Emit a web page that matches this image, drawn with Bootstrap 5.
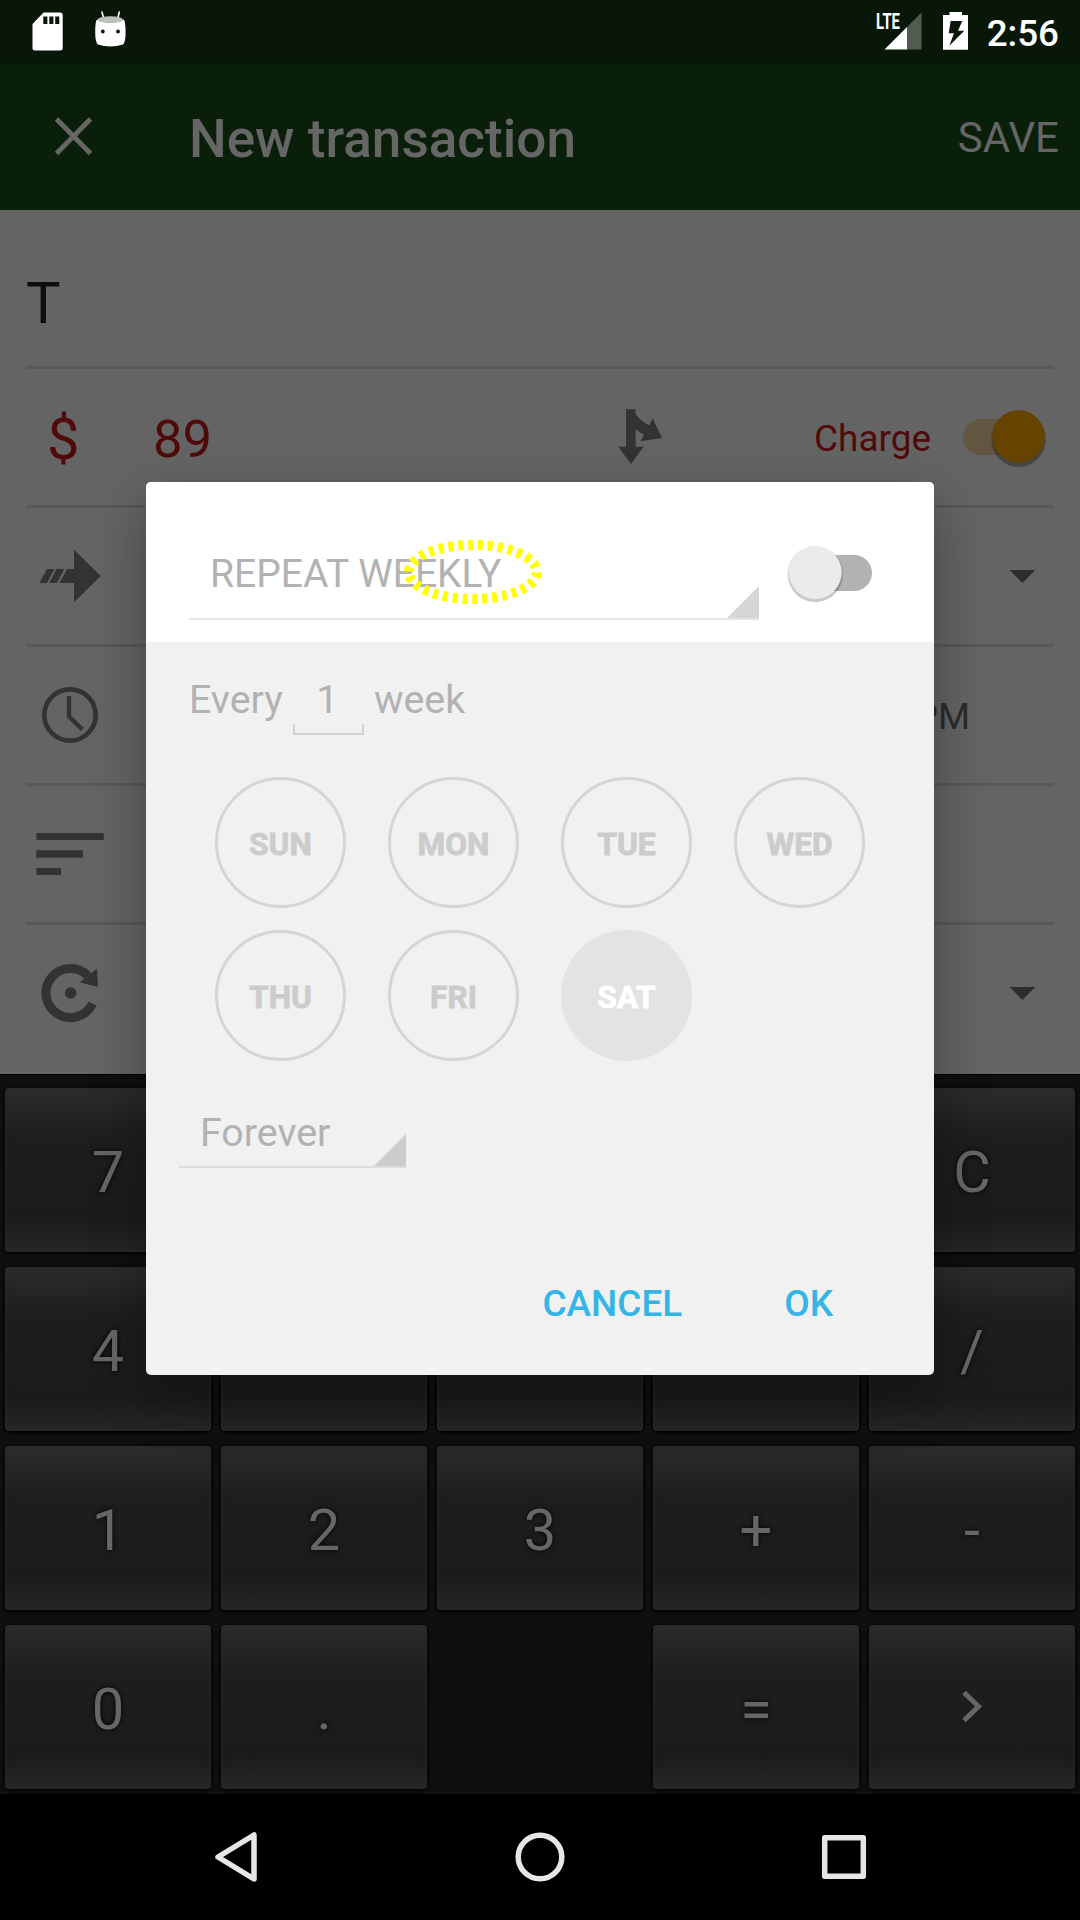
<!DOCTYPE html>
<html lang="en">
<head>
<meta charset="utf-8">
<meta name="viewport" content="width=device-width, initial-scale=1">
<title>New transaction</title>
<link href="https://cdn.jsdelivr.net/npm/bootstrap@5.3.0/dist/css/bootstrap.min.css" rel="stylesheet">
<style>
  body { width: 1080px; height: 1920px; overflow: hidden; background: #000; font-family: Roboto, "Noto Sans", sans-serif; line-height: 1.172; }
  svg { display: block; flex: none; }
  .screen { width: 1080px; height: 1920px; overflow: hidden; }
  .status { height: 63px; background: #081708; color: #fff; padding-right: 21px; }
  .clock-time { font-size: 36.75px; font-weight: 500; padding-top: 4px; }
  .appbar { height: 147px; background: #0a1f09; color: #666; padding: 0 21px 0 0; }
  .appbar-title { font-size: 53.1px; font-weight: 500; padding-top: 5px; }
  .appbar-save { font-size: 42px; padding-top: 3px; }
  .form-area { height: 864px; background: #646464; padding: 0 26px; }
  .name-field { height: 159px; padding-top: 31px; border-bottom: 3px solid #585858; font-size: 57.75px; color: #0d0d0d; }
  .field { height: 139px; border-bottom: 3px solid #585858; }
  .field-last { height: 149px; }
  .debit { color: #500a09; }
  .currency { font-size: 57.75px; width: 127px; padding-left: 21px; padding-top: 5px; }
  .amount { font-size: 52.5px; width: 462px; padding-top: 5px; }
  .charge { font-size: 36.95px; width: 149px; padding-top: 4px; }
  .time-value { font-size: 36.75px; color: #2b2b2b; padding-right: 84px; padding-top: 3px; }
  .keypad { height: 720px; background: #0f0f0f; padding: 13px 5px 5px; display: grid; grid-template-columns: repeat(5, 206px); grid-auto-rows: 164px; gap: 15px 10px; border-top: 1px solid #000; }
  .pad-key { border: 0; border-radius: 4px; color: #666; font-size: 57.75px; line-height: 1.172; padding: 6px 0 0;
    background: linear-gradient(#2c2c2c 0, #252525 15%, #1e1e1e 28%, #1c1c1c 60%, #1b1b1b 80%, #262626 100%);
    box-shadow: inset 0 0 5px #2b2b2b, 0 1px 3px 1px #030303; text-shadow: 0 0 5px #000; }
  .sysnav { height: 126px; background: #000; }
  .repeat-dialog { position: absolute; left: 146px; top: 482px; width: 788px; height: 893px; border-radius: 5px; overflow: hidden; background: #f1f1f1; color: #b2b2b2; font-size: 39.375px; }
  .dialog-shade { position: absolute; left: 146px; top: 482px; width: 788px; height: 893px; border-radius: 5px; box-shadow: 0 20px 54px rgba(0,0,0,.33); }
  .dialog-head { height: 160px; background: #fff; padding-left: 43px; }
  .freq { width: 570px; height: 79px; margin-top: 59px; padding: 11px 0 0 21px; border-bottom: 2px solid #e4e4e4; font-size: 39px; }
  .corner { position: absolute; right: 0; bottom: 0; width: 32px; height: 32px; clip-path: polygon(100% 0, 100% 100%, 0 100%); background: #d6d6d6; }
  .dialog-body { padding: 0 42px 0 43px; }
  .interval { height: 136px; padding-top: 35px; }
  .count-field { width: 71px; height: 58px; margin: 0 10px; text-align: center; position: relative; padding-right: 2px; }
  .count-field::after { content: ""; position: absolute; left: 0; right: 0; bottom: 0; height: 11px; border: 2px solid #d2d2d2; border-top: 0; }
  .days { display: grid; grid-template-columns: repeat(4, 131px); grid-auto-rows: 131px; gap: 22px 42px; padding-left: 26px; margin-top: -1px; }
  .day { border: 3px solid #d5d5d5; border-radius: 50%; color: #ccc; font-size: 31.7px; font-weight: 700; background: none; padding: 4px 0 0; -webkit-text-stroke: .8px currentColor; }
  .day-on { background: #e1e4e2; border-color: #e1e4e2; color: #fff; }
  .until { width: 227px; height: 64px; margin: 43px 0 0 -10px; padding: 6px 0 0 21px; border-bottom: 2px solid #dcdcdc; }
  .until .corner { background: #ccc; }
  .actions { margin-top: 114px; padding-right: 59px; gap: 102px; }
  .act { color: #33b5e5; font-size: 36.95px; font-weight: 500; border: 0; background: none; padding: 0; line-height: 1.172; }
  .highlight { position: absolute; left: 400px; top: 538px; }
</style>
</head>
<body>
<div class="screen position-relative">
  <header class="status d-flex align-items-center">
    <svg width="140" height="63" viewBox="0 0 140 63">
      <path fill="#fff" fill-rule="evenodd" d="M43.5 12.5H60Q62.7 12.5 62.7 15V48Q62.7 50.5 60 50.5H35Q32.5 50.5 32.5 48V24ZM43.3 16.5V24H47.4V16.5ZM49.3 16.5V24H53.4V16.5ZM55.2 16.5V24H59.3V16.5Z"/>
      <path d="M102 12l1.700 7M119.300 12l-1.700 7" stroke="#fff" stroke-width="1.600" stroke-linecap="round"/>
      <path fill="#fff" d="M97 19.500Q110.300 26 123.600 19.500Q125.600 21 125.600 32Q125.600 42.500 123 44.500Q110.300 48.500 98 44.500Q95.200 42.500 95.200 32Q95.200 21 97 19.500Z"/>
      <ellipse cx="110.300" cy="19.700" rx="12.500" ry="3.400" fill="#bcc1bc"/>
      <circle cx="102.800" cy="31.500" r="1.900" fill="#081708"/><circle cx="118" cy="31.500" r="1.900" fill="#081708"/>
    </svg>
    <svg class="ms-auto" width="112" height="63" viewBox="871 0 112 63">
      <text x="876" y="29" font-family="Roboto" font-weight="700" font-size="22.500" fill="#fff" textLength="24" lengthAdjust="spacingAndGlyphs">LTE</text>
      <path d="M907 27V49.500H921.500V12.500Z" fill="#515b51"/><path d="M884.500 49.500H907V27Z" fill="#fff"/>
      <path fill="#fff" fill-rule="evenodd" d="M949.500 12H962V15H968V49.700H943V15H949.500ZM950.700 21L948.700 33.300H954L949.300 45.700L964.300 30.700H958L962.300 21Z"/>
    </svg>
    <div class="clock-time ps-1 text-nowrap">2:56</div>
  </header>
  <nav class="appbar d-flex align-items-center">
    <svg width="189" height="147" viewBox="0 63 189 147"><path d="M56.500 119L90.500 153.500M90.500 119L56.500 153.500" stroke="#666" stroke-width="4.800"/></svg>
    <div class="appbar-title">New transaction</div>
    <div class="appbar-save ms-auto">SAVE</div>
  </nav>

  <main class="form-area">
    <div class="name-field d-flex align-items-center">T</div>
    <div class="field d-flex align-items-center">
      <div class="currency debit">$</div>
      <div class="amount debit">89</div>
      <svg width="50" height="136" viewBox="105 -33 150 408"><path fill="#333" d="M138 88H167V103C178 118 195 131 208 136L218 115L246 174L182 184L192 163C183 160 174 153 167 146V200H191L153 252L115 200H138Z"/></svg>
      <div class="charge debit ms-auto">Charge</div>
      <svg width="91" height="136" viewBox="963 369 91 136">
        <rect x="963" y="419" width="70" height="36" rx="18" fill="#635640"/>
        <circle cx="1018.600" cy="439" r="27.500" fill="#000" opacity=".18"/><circle cx="1018.600" cy="441" r="26.500" fill="#000" opacity=".15"/>
        <circle cx="1018.600" cy="436.500" r="26.300" fill="#664400"/>
      </svg>
    </div>
    <div class="field d-flex align-items-center">
      <svg width="90" height="136" viewBox="78 744 270 408"><path fill="#333" d="M141 927H163L141 969H118ZM169 927H193L171 969H148ZM202 927H222V869L302 948L222 1027V969H178Z"/></svg>
      <svg class="ms-auto" width="50" height="136" viewBox="1004 508 50 136"><path fill="#2d2d2d" d="M1009.700 570H1035.300L1022.500 583Z"/></svg>
    </div>
    <div class="field d-flex align-items-center">
      <svg width="90" height="136" viewBox="78 -39 270 408"><g fill="none" stroke="#333"><circle cx="210" cy="165" r="77" stroke-width="14"/><path d="M207 108V170L247 208" stroke-width="13"/></g></svg>
      <div class="time-value ms-auto">2:56 PM</div>
    </div>
    <div class="field d-flex align-items-center">
      <svg width="90" height="136" viewBox="78 378 270 408"><path fill="#333" d="M109 519H311V540H109ZM109 571H249V593H109ZM109 624H183V645H109Z"/></svg>
    </div>
    <div class="field-last d-flex align-items-center">
      <svg width="90" height="149" viewBox="78 795 270 447"><path d="M277.600 1031A73.500 73.500 0 1 1 264 948" fill="none" stroke="#333" stroke-width="27"/><path fill="#333" d="M291 926L294 981L239 967Z"/><circle cx="212" cy="999" r="17.500" fill="#333"/></svg>
      <svg class="ms-auto" width="50" height="149" viewBox="1004 925 50 149"><path fill="#2d2d2d" d="M1009.700 987H1035.300L1022.500 1000Z"/></svg>
    </div>
  </main>

  <section class="keypad">
    <button class="pad-key">7</button><button class="pad-key"></button><button class="pad-key"></button><button class="pad-key"></button><button class="pad-key">C</button>
    <button class="pad-key">4</button><button class="pad-key"></button><button class="pad-key"></button><button class="pad-key"></button><button class="pad-key">/</button>
    <button class="pad-key">1</button><button class="pad-key">2</button><button class="pad-key">3</button><button class="pad-key">+</button><button class="pad-key">-</button>
    <button class="pad-key">0</button><button class="pad-key">.</button><span></span><button class="pad-key">=</button>
    <button class="pad-key d-flex align-items-center justify-content-center pt-0"><svg width="22" height="34" viewBox="0 0 22 34"><path d="M3 2.500L17.500 16.500L3 30.500" fill="none" stroke="#666" stroke-width="5"/></svg></button>
  </section>

  <footer class="sysnav">
    <svg width="1080" height="126" viewBox="0 1794 1080 126"><g fill="none" stroke="#e6e6e6" stroke-width="5.500" stroke-linejoin="round">
      <path d="M254 1835V1879L218 1857Z"/><circle cx="540" cy="1857" r="21.800"/><rect x="824.700" y="1837.700" width="38.600" height="38.600"/></g></svg>
  </footer>

  <div class="dialog-shade"></div>
  <div class="repeat-dialog" role="dialog">
    <div class="dialog-head d-flex align-items-start">
      <div class="freq position-relative">REPEAT WEEKLY<span class="corner"></span></div>
      <svg width="110" height="160" viewBox="759 482 110 160" overflow="visible">
        <rect x="810" y="555" width="62" height="36" rx="18" fill="#b2b2b2"/>
        <circle cx="815.300" cy="574" r="28" opacity=".1"/><circle cx="815.300" cy="575.500" r="26.800" opacity=".12"/>
        <circle cx="815.300" cy="572.500" r="26.400" fill="#ebebeb"/>
      </svg>
    </div>
    <div class="dialog-body">
      <div class="interval d-flex align-items-start">
        <span>Every</span><span class="count-field">1</span><span>week</span>
      </div>
      <div class="days">
        <button class="day">SUN</button><button class="day">MON</button><button class="day">TUE</button><button class="day">WED</button>
        <button class="day">THU</button><button class="day">FRI</button><button class="day day-on">SAT</button>
      </div>
      <div class="until position-relative">Forever<span class="corner"></span></div>
      <div class="actions d-flex justify-content-end">
        <button class="act">CANCEL</button><button class="act">OK</button>
      </div>
    </div>
  </div>
  <svg class="highlight" width="146" height="68" viewBox="400 538 146 68"><ellipse cx="472.800" cy="572" rx="64" ry="27" fill="none" stroke="#ff0" stroke-width="10" stroke-dasharray="5 4.900" stroke-dashoffset="-.5"/></svg>
</div>
<script src="https://cdn.jsdelivr.net/npm/bootstrap@5.3.0/dist/js/bootstrap.bundle.min.js"></script>
</body>
</html>
